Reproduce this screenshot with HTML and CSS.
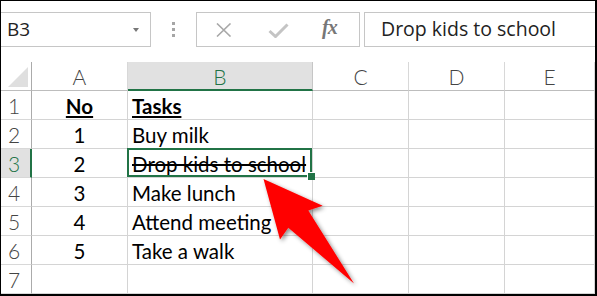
FILE: index.html
```html
<!DOCTYPE html>
<html>
<head>
<meta charset="utf-8">
<link rel="stylesheet" href="styles.css">
</head>
<body>
<div class="frame">
  <div class="fbar">
    <div class="namebox"><span class="ref">B3</span><span class="caret"></span></div>
    <div class="dots"><i></i><i></i><i></i></div>
    <div class="btns">
      <svg class="ic-x" width="18" height="14" viewBox="0 0 18 14"><path d="M2 0.5 L15.5 13.5 M15.5 0.5 L2 13.5" stroke="#a8a8a8" stroke-width="1.6" fill="none"/></svg>
      <svg class="ic-ok" width="21" height="15" viewBox="0 0 21 15"><path d="M1.5 8 L7.5 13.5 L19.5 1.5" stroke="#c4c4c4" stroke-width="3" fill="none"/></svg>
      <span class="fx">fx</span>
    </div>
    <div class="formula">Drop kids to school</div>
  </div>
  <div class="sheet">
    <div class="corner"><span class="tri"></span></div>
    <div class="ch">A</div>
    <div class="ch sel">B</div>
    <div class="ch">C</div>
    <div class="ch">D</div>
    <div class="ch">E</div>

    <div class="rh">1</div>
    <div class="c num"><b class="u">No</b></div>
    <div class="c"><b class="u">Tasks</b></div>
    <div class="c"></div><div class="c"></div><div class="c"></div>

    <div class="rh">2</div>
    <div class="c num">1</div>
    <div class="c">Buy milk</div>
    <div class="c"></div><div class="c"></div><div class="c"></div>

    <div class="rh sel">3</div>
    <div class="c num">2</div>
    <div class="c active"><s>Drop kids to school</s></div>
    <div class="c"></div><div class="c"></div><div class="c"></div>

    <div class="rh">4</div>
    <div class="c num">3</div>
    <div class="c">Make lunch</div>
    <div class="c"></div><div class="c"></div><div class="c"></div>

    <div class="rh">5</div>
    <div class="c num">4</div>
    <div class="c">Attend meeting</div>
    <div class="c"></div><div class="c"></div><div class="c"></div>

    <div class="rh">6</div>
    <div class="c num">5</div>
    <div class="c">Take a walk</div>
    <div class="c"></div><div class="c"></div><div class="c"></div>

    <div class="rh">7</div>
    <div class="c num"></div>
    <div class="c"></div>
    <div class="c"></div><div class="c"></div><div class="c"></div>
  </div>
  <svg class="arrow" width="597" height="296" viewBox="0 0 597 296">
    <defs>
      <filter id="sh" x="-20%" y="-20%" width="150%" height="150%">
        <feDropShadow dx="2" dy="2" stdDeviation="2" flood-color="#000" flood-opacity="0.45"/>
      </filter>
    </defs>
    <polygon points="263.5,179 322.7,205.7 308.3,210.5 354,283.5 288.3,227.7 280,239.5" fill="#ff0000" filter="url(#sh)"/>
  </svg>
</div>
</body>
</html>
```

FILE: styles.css
```css
* { box-sizing: border-box; }
html, body { margin: 0; padding: 0; background: #fff; }
.frame {
  position: relative;
  width: 597px;
  height: 296px;
  border-top: 1px solid #000;
  border-left: 1px solid #000;
  border-right: 2px solid #000;
  border-bottom: 2px solid #000;
  overflow: hidden;
  background: #fff;
}
.fbar {
  display: flex;
  align-items: flex-start;
  padding-top: 11px;
  height: 61px;
}
.namebox {
  width: 150px;
  height: 35px;
  border: 1px solid #c6c6c6;
  border-left: none;
  display: flex;
  align-items: center;
  justify-content: space-between;
  padding: 0 11px 0 6px;
  font-family: "Open Sans", "Noto Sans", sans-serif;
  font-size: 19px;
  color: #222;
}
.ref { position: relative; top: -1px; }
.caret {
  width: 0; height: 0;
  border-left: 3.5px solid transparent;
  border-right: 3.5px solid transparent;
  border-top: 4px solid #777;
  margin-top: 1px;
}
.dots {
  width: 45px;
  height: 35px;
  display: flex;
  flex-direction: column;
  align-items: center;
  padding-top: 10px;
  gap: 3px;
}
.dots i { display: block; width: 3px; height: 3px; background: #a6a6a6; }
.btns {
  width: 164px;
  height: 35px;
  border: 1px solid #c6c6c6;
  display: flex;
  align-items: center;
  padding-left: 18px;
}
.ic-x { margin-top: 1px; }
.ic-ok { margin-left: 35px; margin-top: 1px; }
.fx {
  margin-left: 33px;
  font-family: "Liberation Serif", "DejaVu Serif", serif;
  font-style: italic;
  font-weight: bold;
  font-size: 20px;
  color: #777;
  letter-spacing: -1px;
  position: relative;
  top: -2px;
}
.formula {
  flex: 1;
  margin-left: 4px;
  height: 35px;
  border: 1px solid #c6c6c6;
  border-right: none;
  padding-left: 16px;
  font-family: "Open Sans", "Noto Sans", sans-serif;
  font-size: 19.5px;
  line-height: 32px;
  color: #222;
}
.sheet {
  display: grid;
  grid-template-columns: 31px 96px 185px 96px 96px 1fr;
  grid-auto-rows: 29px;
  font-family: "Lato", "Carlito", sans-serif;
  font-size: 20.5px;
  color: #000;
}
.corner {
  position: relative;
  border-right: 1px solid #ababab;
  border-bottom: 1px solid #bdbdbd;
}
.tri {
  position: absolute;
  right: 3px;
  bottom: 3px;
  width: 0; height: 0;
  border-left: 20px solid transparent;
  border-bottom: 20px solid #dfdfdf;
}
.ch {
  border-right: 1px solid #d8d8d8;
  border-bottom: 1px solid #bdbdbd;
  text-align: center;
  line-height: 30px;
  color: #444;
  font-weight: 300;
  font-size: 21px;
}
.ch.sel {
  background: #e1e1e1;
  color: #217346;
  border-bottom: 2px solid #217346;
  border-right-color: #c6c6c6;
}
.rh {
  border-right: 1px solid #ababab;
  border-bottom: 1px solid #d8d8d8;
  padding-left: 7px;
  line-height: 30px;
  color: #444;
  font-weight: 300;
  font-size: 21px;
}
.rh.sel {
  background: #e1e1e1;
  color: #217346;
  border-right: 2px solid #217346;
}
.c {
  border-right: 1px solid #d4d4d4;
  border-bottom: 1px solid #d4d4d4;
  padding-left: 4px;
  line-height: 30px;
  white-space: nowrap;
}
.c.num { text-align: center; padding-left: 0; }
.u { text-decoration: underline; text-underline-offset: 2px; text-decoration-thickness: 1.5px; }
s { text-decoration-thickness: 1.5px; }
.c.active { position: relative; overflow: visible; }
.c.active::after {
  content: "";
  position: absolute;
  top: -1px; left: -1px; right: 0; bottom: 0;
  border: 2px solid #217346;
}
.c.active::before {
  content: "";
  position: absolute;
  right: -3px;
  bottom: -3px;
  width: 7px;
  height: 7px;
  background: #217346;
  border-top: 1px solid #fff;
  border-left: 1px solid #fff;
  z-index: 2;
}
.arrow { position: absolute; left: -1px; top: -1px; pointer-events: none; }
```
